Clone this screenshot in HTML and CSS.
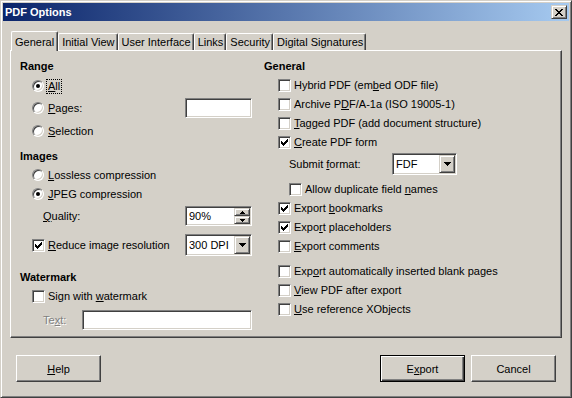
FILE: index.html
```html
<!DOCTYPE html>
<html lang="en">
<head>
    <meta charset="UTF-8">
    <title>PDF Options</title>
    <link rel="stylesheet" href="styles.css">
</head>
<body>
    <div class="window">
        <div class="titlebar">
            <span class="title">PDF Options</span>
            <span class="raised close">
                <svg width="8" height="7" viewBox="0 0 8 7" shape-rendering="crispEdges"><path d="M0 0h2v1h-2zM6 0h2v1h-2zM1 1h2v1h-2zM5 1h2v1h-2zM2 2h4v1h-4zM3 3h2v1h-2zM2 4h4v1h-4zM1 5h2v1h-2zM5 5h2v1h-2zM0 6h2v1h-2zM6 6h2v1h-2z"/></svg>
            </span>
        </div>

        <div class="client">
            <div class="tabs">
                <div class="tab active">General</div>
                <div class="tab">Initial View</div>
                <div class="tab">User Interface</div>
                <div class="tab">Links</div>
                <div class="tab">Security</div>
                <div class="tab">Digital Signatures</div>
            </div>

            <div class="panel">
                <!-- left column -->
                <div class="col">
                    <div class="row heading">Range</div>
                    <div class="row indent mt-2"><span class="radio on"><i></i></span><span class="lbl focus"><u>A</u>ll</span></div>
                    <div class="row indent mt-4"><span class="radio"></span><span class="lbl"><u>P</u>ages:</span><span class="field w-67"></span></div>
                    <div class="row indent mt-5"><span class="radio"></span><span class="lbl"><u>S</u>election</span></div>

                    <div class="row heading mt-7">Images</div>
                    <div class="row indent"><span class="radio"></span><span class="lbl"><u>L</u>ossless compression</span></div>
                    <div class="row indent"><span class="radio on"><i></i></span><span class="lbl"><u>J</u>PEG compression</span></div>
                    <div class="row indent-2 mt-4">
                        <span><u>Q</u>uality:</span>
                        <span class="field w-67">
                            <span class="value">90%</span>
                            <span class="spin">
                                <span class="raised"><svg width="5" height="3" viewBox="0 0 5 3" shape-rendering="crispEdges"><path d="M2 0h1v1h-1zM1 1h3v1h-3zM0 2h5v1h-5z"/></svg></span>
                                <span class="raised"><svg width="5" height="3" viewBox="0 0 5 3" shape-rendering="crispEdges"><path d="M0 0h5v1h-5zM1 1h3v1h-3zM2 2h1v1h-1z"/></svg></span>
                            </span>
                        </span>
                    </div>
                    <div class="row indent mt-11">
                        <span class="check"><svg width="7" height="7" viewBox="0 0 7 7" shape-rendering="crispEdges"><path d="M6 0h1v1h-1zM5 1h2v1h-2zM0 2h1v1h-1zM4 2h3v1h-3zM0 3h2v1h-2zM3 3h3v1h-3zM0 4h5v1h-5zM1 5h3v1h-3zM2 6h1v1h-1z"/></svg></span>
                        <span class="lbl-c"><u>R</u>educe image resolution</span>
                        <span class="field combo w-67">
                            <span class="value">300 DPI</span>
                            <span class="raised drop"><svg width="7" height="4" viewBox="0 0 7 4" shape-rendering="crispEdges"><path d="M0 0h7v1h-7zM1 1h5v1h-5zM2 2h3v1h-3zM3 3h1v1h-1z"/></svg></span>
                        </span>
                    </div>

                    <div class="row heading mt-14">Watermark</div>
                    <div class="row indent"><span class="check"></span><span class="lbl-c">Sign with <u>w</u>atermark</span></div>
                    <div class="row indent-2 mt-6">
                        <span class="disabled">Te<u>x</u>t:</span>
                        <span class="field w-170"></span>
                    </div>
                </div>

                <!-- right column -->
                <div class="col">
                    <div class="row heading">General</div>
                    <div class="row indent-r"><span class="check"></span><span class="lbl-c">Hybrid PDF (em<u>b</u>ed ODF file)</span></div>
                    <div class="row indent-r"><span class="check"></span><span class="lbl-c">Archive P<u>D</u>F/A-1a (ISO 19005-1)</span></div>
                    <div class="row indent-r"><span class="check"></span><span class="lbl-c"><u>T</u>agged PDF (add document structure)</span></div>
                    <div class="row indent-r">
                        <span class="check"><svg width="7" height="7" viewBox="0 0 7 7" shape-rendering="crispEdges"><path d="M6 0h1v1h-1zM5 1h2v1h-2zM0 2h1v1h-1zM4 2h3v1h-3zM0 3h2v1h-2zM3 3h3v1h-3zM0 4h5v1h-5zM1 5h3v1h-3zM2 6h1v1h-1z"/></svg></span>
                        <span class="lbl-c"><u>C</u>reate PDF form</span>
                    </div>
                    <div class="row indent-sub mt-4">
                        <span class="submit-lbl">Submit <u>f</u>ormat:</span>
                        <span class="field combo w-65">
                            <span class="value">FDF</span>
                            <span class="raised drop"><svg width="7" height="4" viewBox="0 0 7 4" shape-rendering="crispEdges"><path d="M0 0h7v1h-7zM1 1h5v1h-5zM2 2h3v1h-3zM3 3h1v1h-1z"/></svg></span>
                        </span>
                    </div>
                    <div class="row indent-sub mt-7"><span class="check"></span><span class="lbl-c">Allow duplicate field <u>n</u>ames</span></div>
                    <div class="row indent-r">
                        <span class="check"><svg width="7" height="7" viewBox="0 0 7 7" shape-rendering="crispEdges"><path d="M6 0h1v1h-1zM5 1h2v1h-2zM0 2h1v1h-1zM4 2h3v1h-3zM0 3h2v1h-2zM3 3h3v1h-3zM0 4h5v1h-5zM1 5h3v1h-3zM2 6h1v1h-1z"/></svg></span>
                        <span class="lbl-c">Export <u>b</u>ookmarks</span>
                    </div>
                    <div class="row indent-r">
                        <span class="check"><svg width="7" height="7" viewBox="0 0 7 7" shape-rendering="crispEdges"><path d="M6 0h1v1h-1zM5 1h2v1h-2zM0 2h1v1h-1zM4 2h3v1h-3zM0 3h2v1h-2zM3 3h3v1h-3zM0 4h5v1h-5zM1 5h3v1h-3zM2 6h1v1h-1z"/></svg></span>
                        <span class="lbl-c">Expo<u>r</u>t placeholders</span>
                    </div>
                    <div class="row indent-r"><span class="check"></span><span class="lbl-c"><u>E</u>xport comments</span></div>
                    <div class="row indent-r mt-7"><span class="check"></span><span class="lbl-c">Exp<u>o</u>rt automatically inserted blank pages</span></div>
                    <div class="row indent-r"><span class="check"></span><span class="lbl-c"><u>V</u>iew PDF after export</span></div>
                    <div class="row indent-r"><span class="check"></span><span class="lbl-c"><u>U</u>se reference XObjects</span></div>
                </div>
            </div>

            <div class="footer">
                <button class="btn"><u>H</u>elp</button>
                <span class="spacer"></span>
                <button class="btn btn-default">E<u>x</u>port</button>
                <button class="btn">Cancel</button>
            </div>
        </div>
    </div>
</body>
</html>
```

FILE: styles.css
```css
* {
    box-sizing: border-box;
}

body {
    margin: 0;
    font-family: "Liberation Sans", Arial, sans-serif;
    font-size: 11px;
    color: #000;
    background-color: #d4d0c8;
}

u {
    text-decoration-thickness: 1px;
    text-underline-offset: 1px;
}

.window {
    width: 572px;
    height: 398px;
    display: flex;
    flex-direction: column;
    background-color: #d4d0c8;
    border: 1px solid;
    border-color: #d4d0c8 #404040 #404040 #d4d0c8;
    box-shadow: inset 1px 1px #fff, inset -1px -1px #808080;
    padding: 2px;
}

/* title bar */
.titlebar {
    height: 18px;
    display: flex;
    align-items: center;
    background: linear-gradient(to right, #0a246a, #a6caf0);
    color: #fff;
}

.title {
    flex: 1;
    padding-left: 2px;
    font-weight: bold;
}

.raised {
    display: flex;
    align-items: center;
    justify-content: center;
    background-color: #d4d0c8;
    border: 1px solid;
    border-color: #d4d0c8 #404040 #404040 #d4d0c8;
    box-shadow: inset 1px 1px #fff, inset -1px -1px #808080;
}

.close {
    width: 16px;
    height: 14px;
    margin-right: 2px;
}

/* tabs */
.client {
    flex: 1;
    display: flex;
    flex-direction: column;
    padding: 10px 7px 0;
}

.tabs {
    display: flex;
    align-items: flex-end;
    height: 19px;
    padding-left: 1px;
}

.tab {
    height: 17px;
    display: flex;
    align-items: center;
    padding: 0 2px 0 3px;
    white-space: nowrap;
    border-top: 1px solid #fff;
    border-left: 1px solid #fff;
    border-right: 1px solid #404040;
    border-radius: 2px 2px 0 0;
    box-shadow: inset -1px 0 #808080;
}

.tab.active {
    position: relative;
    z-index: 1;
    height: 20px;
    margin-bottom: -1px;
    padding: 1px 3px 0 3px;
    background-color: #d4d0c8;
}

.panel {
    height: 288px;
    display: grid;
    grid-template-columns: 232px 1fr;
    column-gap: 12px;
    align-content: start;
    padding: 6px 0 0 9px;
    border: 1px solid;
    border-color: #fff #404040 #404040 #fff;
    box-shadow: inset -1px -1px #808080;
}

.col {
    display: flex;
    flex-direction: column;
}

/* rows */
.row {
    height: 18px;
    display: flex;
    align-items: center;
    margin-top: 1px;
    white-space: nowrap;
}

.heading {
    font-weight: bold;
    margin-top: 0;
}

.row.mt-2 { margin-top: 2px; }
.row.mt-4 { margin-top: 4px; }
.row.mt-5 { margin-top: 5px; }
.row.mt-6 { margin-top: 6px; }
.row.mt-7 { margin-top: 7px; }
.row.mt-11 { margin-top: 11px; }
.row.mt-14 { margin-top: 14px; }

.indent { padding-left: 12px; }
.indent-2 { padding-left: 23px; }
.indent-r { padding-left: 14px; }
.indent-sub { padding-left: 25px; }

.lbl {
    margin-left: 4px;
}

.lbl-c {
    margin-left: 3px;
}

.focus {
    outline: 1px dotted #000;
    padding: 0 1px 1px;
    margin-left: 3px;
}

.disabled {
    color: #808080;
    text-shadow: 1px 1px #fff;
}

.submit-lbl {
    width: 103px;
}

/* controls */
.check {
    flex: none;
    width: 13px;
    height: 13px;
    display: flex;
    align-items: center;
    justify-content: center;
    background-color: #fff;
    border: 1px solid;
    border-color: #808080 #fff #fff #808080;
    box-shadow: inset 1px 1px #404040, inset -1px -1px #d4d0c8;
}

.radio {
    flex: none;
    width: 12px;
    height: 12px;
    display: flex;
    align-items: center;
    justify-content: center;
    border-radius: 50%;
    background-color: #fff;
    border: 1px solid;
    border-color: #808080 #fff #fff #808080;
    box-shadow: inset 1px 1px #404040, inset -1px -1px #d4d0c8;
}

.radio i {
    width: 4px;
    height: 4px;
    border-radius: 50%;
    background-color: #000;
}

.field {
    flex: none;
    height: 20px;
    margin-left: auto;
    display: flex;
    align-items: stretch;
    padding: 1px 1px 1px 2px;
    background-color: #fff;
    border: 1px solid;
    border-color: #808080 #fff #fff #808080;
    box-shadow: inset 1px 1px #404040, inset -1px -1px #d4d0c8;
}

.field.combo {
    height: 22px;
}

.w-65 { width: 65px; }
.w-67 { width: 67px; }
.w-170 { width: 170px; }

.indent-sub .field {
    margin-left: 0;
}

.value {
    flex: 1;
    display: flex;
    align-items: center;
    padding-left: 1px;
}

.drop {
    width: 16px;
}

.spin {
    width: 16px;
    display: flex;
    flex-direction: column;
}

.spin .raised {
    flex: 1;
}

/* buttons */
.footer {
    display: flex;
    gap: 6px;
    margin-top: 17px;
    padding: 0 6px;
}

.spacer {
    flex: 1;
}

.btn {
    width: 85px;
    height: 27px;
    padding: 0;
    font: inherit;
    color: #000;
    background-color: #d4d0c8;
    border: 1px solid;
    border-color: #fff #404040 #404040 #fff;
    box-shadow: inset -1px -1px #808080;
}

.btn-default {
    border-color: #000;
    box-shadow: inset 1px 1px #fff, inset -1px -1px #404040, inset -2px -2px #808080;
}
```
